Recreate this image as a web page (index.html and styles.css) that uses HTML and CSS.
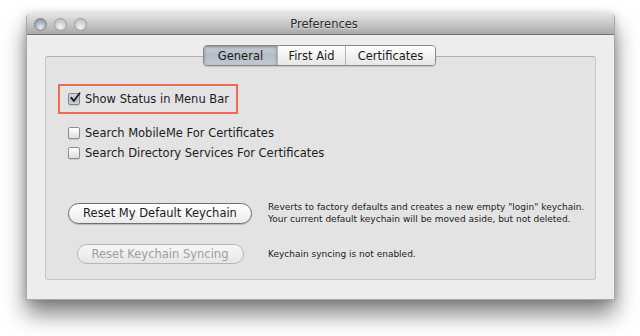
FILE: index.html
```html
<!doctype html>
<html lang="en">
	<head>
		<meta charset="utf-8">
		<title>Preferences</title>
		<link rel="stylesheet" href="styles.css">
	</head>
	<body>
		<div class="window">
			<div class="titlebar">
				<div class="lights">
					<span class="light light-front"></span>
					<span class="light"></span>
					<span class="light"></span>
				</div>
				<div class="title">Preferences</div>
			</div>

			<div class="content">
				<div class="tabs">
					<span class="tab tab-active">General</span><span class="tab">First Aid</span><span class="tab">Certificates</span>
				</div>

				<div class="group">
					<div class="highlight">
						<label class="check">
							<span class="box box-checked">
								<svg width="12" height="12" viewBox="0 0 12 12"><path d="M2.2 5.6 L4.8 9 L10.6 1.2" fill="none" stroke="#1d1d1d" stroke-width="1.8" stroke-linecap="round" stroke-linejoin="round"/></svg>
							</span>
							Show Status in Menu Bar
						</label>
					</div>

					<div class="checks">
						<label class="check"><span class="box"></span>Search MobileMe For Certificates</label>
						<label class="check"><span class="box"></span>Search Directory Services For Certificates</label>
					</div>

					<div class="actions">
						<span class="button">Reset My Default Keychain</span>
						<p class="note">Reverts to factory defaults and creates a new empty "login" keychain.<br>Your current default keychain will be moved aside, but not deleted.</p>
						<span class="button button-disabled">Reset Keychain Syncing</span>
						<p class="note">Keychain syncing is not enabled.</p>
					</div>
				</div>
			</div>
		</div>
	</body>
</html>
```

FILE: styles.css
```css
* { box-sizing: border-box; }

:root {
	--font-ui: "DejaVu Sans", "Liberation Sans", sans-serif;
	--text: #1c1c1c;
	--edge: #8c8c8c;
}

html,
body {
	margin: 0;
	padding: 0;
	background-color: #fff;
	font-family: var(--font-ui);
	color: var(--text);
}

body {
	height: 336px;
	padding: 14px 0 0 26px;
}

/* Window */
.window {
	width: 589px;
	height: 286px;
	display: flex;
	flex-direction: column;
	background-color: #ededed;
	border: 1px solid #a9a9a9;
	border-top: none;
	border-radius: 4px 4px 0 0;
	box-shadow: 0 14px 22px rgba(0, 0, 0, 0.5), 0 0 8px rgba(0, 0, 0, 0.18);
}

.titlebar {
	height: 21px;
	display: grid;
	grid-template-columns: 1fr auto 1fr;
	align-items: center;
	background: linear-gradient(#e4e4e4, #c6c6c6 50%, #a9a9a9);
	border-bottom: 1px solid #757575;
	border-radius: 4px 4px 0 0;
	padding-left: 7px;
}

.lights {
	display: flex;
	gap: 7px;
}

.light {
	width: 13px;
	height: 13px;
	border-radius: 50%;
	border: 1px solid #9a9a9a;
	background: radial-gradient(circle at 50% 75%, #f4f4f4, #d0d0d0 55%, #b9b9b9);
}
.light-front {
	border-color: #7e858c;
	background: radial-gradient(circle at 50% 75%, #e3ecf3, #a7b0b9 55%, #7d8690);
}

.title {
	font-size: 11.5px;
	color: #2a2a2a;
	text-shadow: 0 1px 0 rgba(255, 255, 255, 0.5);
}

/* Content */
.content {
	flex: 1;
	display: flex;
	flex-direction: column;
	padding: 10px 18px 19px 18px;
}

.tabs {
	position: relative;
	z-index: 1;
	align-self: center;
	display: flex;
	height: 21px;
	border: 1px solid #8a8a8a;
	border-radius: 4px;
	overflow: hidden;
	box-shadow: 0 1px 1px rgba(0, 0, 0, 0.15);
	margin-left: -2px;
}

.tab {
	display: flex;
	align-items: center;
	justify-content: center;
	font-size: 11.5px;
	background: linear-gradient(#ffffff, #f2f2f2 50%, #e6e6e6);
	border-left: 1px solid #b4b4b4;
}
.tab:nth-child(1) { width: 73px; border-left: none; }
.tab:nth-child(2) { width: 68px; }
.tab:nth-child(3) { width: 90px; }

.tab-active {
	background: linear-gradient(#c7ced6, #b4bdc7 50%, #c3cad2);
	box-shadow: inset 0 1px 3px rgba(0, 0, 0, 0.35);
}

.group {
	flex: 1;
	margin-top: -10px;
	padding: 27px 12px 0 12px;
	background-color: #e3e3e3;
	border: 1px solid #c6c6c6;
	border-top-color: #b0b0b0;
	border-radius: 3px;
}

/* Checkboxes */
.check {
	display: flex;
	align-items: center;
	gap: 5px;
	font-size: 11.5px;
	height: 20px;
	white-space: nowrap;
}

.box {
	width: 12px;
	height: 12px;
	display: flex;
	border: 1px solid #8e8e8e;
	border-radius: 2px;
	background: linear-gradient(#ffffff, #ececec 55%, #dedede);
	box-shadow: 0 1px 1px rgba(0, 0, 0, 0.12);
}
.box svg {
	margin: -2px 0 0 0;
	overflow: visible;
}
.box-checked {
	background: linear-gradient(#d4dbe2, #b5bfca 55%, #c8d0d8);
	border-color: #7f8791;
}

.highlight {
	display: inline-flex;
	padding: 3px 7px 3px 8px;
	border: 2px solid #f26a4e;
}

.checks {
	display: flex;
	flex-direction: column;
	margin: 9px 0 0 10px;
}

/* Buttons and notes */
.actions {
	display: grid;
	grid-template-columns: 184px auto;
	grid-template-rows: 24px 20px;
	column-gap: 16px;
	row-gap: 19px;
	align-items: center;
	justify-items: start;
	margin: 38px 0 0 10px;
}

.button {
	justify-self: center;
	display: flex;
	align-items: center;
	justify-content: center;
	width: 184px;
	height: 21px;
	font-size: 11.5px;
	border: 1px solid #6f6f6f;
	border-radius: 11px;
	background: linear-gradient(#ffffff, #f6f6f6 50%, #e9e9e9);
	box-shadow: 0 1px 1px rgba(0, 0, 0, 0.18);
}

.button-disabled {
	width: 167px;
	height: 20px;
	color: #9d9d9d;
	border-color: #b5b5b5;
	background: linear-gradient(#f7f7f7, #efefef 50%, #e6e6e6);
	box-shadow: none;
}

.note {
	margin: 0;
	font-size: 9px;
	line-height: 12px;
	white-space: nowrap;
}
```
